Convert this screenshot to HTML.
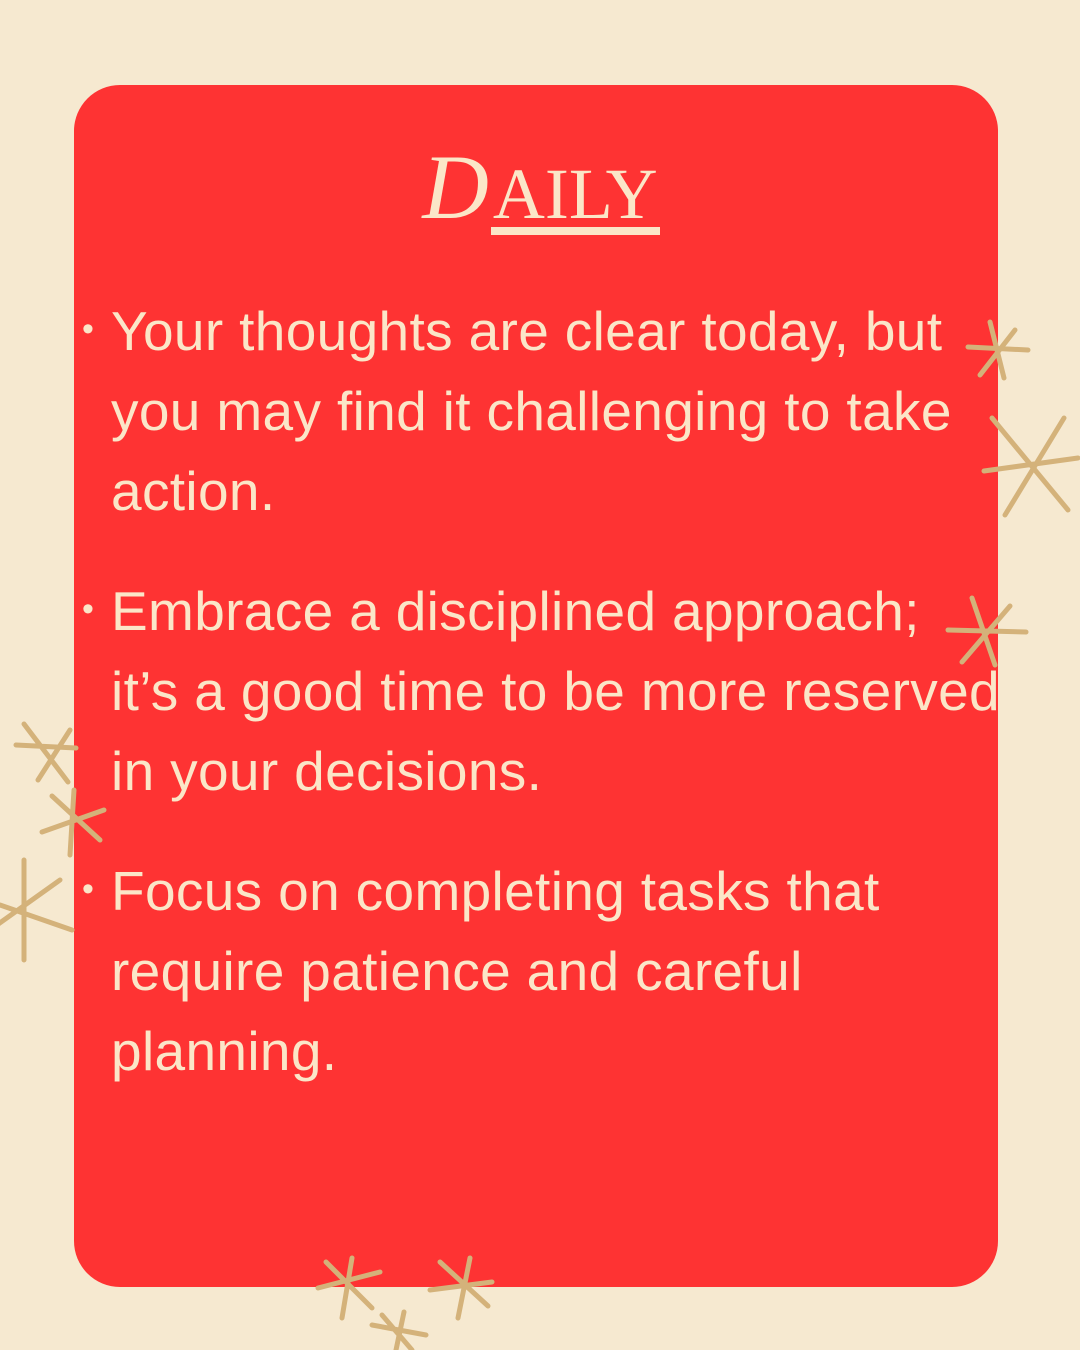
<!DOCTYPE html>
<html><head><meta charset="utf-8"><style>
html,body{margin:0;padding:0}
body{width:1080px;height:1350px;background:#f6e9d0;position:relative;overflow:hidden;font-family:"Liberation Sans",sans-serif}
.card{position:absolute;left:74px;top:85px;width:924px;height:1202px;background:#fe3333;border-radius:46px}
.t{position:absolute;left:111px;color:#fbe6c8;font-size:55px;white-space:nowrap;letter-spacing:0.35px;line-height:1}
.b{position:absolute;left:82px;color:#fbe6c8;font-size:34px;line-height:1}
.title{position:absolute;left:0;width:1080px;top:146px;text-align:center;color:#fbe6c8;font-family:"Liberation Serif",serif;font-size:72px;line-height:1}
.title span{display:inline-block;border-bottom:8px solid #fbe6c8;line-height:0.9;padding:0 2px}
svg{position:absolute;left:0;top:0}
</style></head><body>
<div class="card"></div>
<div class="title"><span style="border:none;font-size:92px;font-style:italic">D</span><span>AILY</span></div>
<div class="b" style="top:312px">•</div>
<div class="t" style="top:304px">Your thoughts are clear today, but</div>
<div class="t" style="top:384px">you may find it challenging to take</div>
<div class="t" style="top:464px">action.</div>
<div class="b" style="top:592px">•</div>
<div class="t" style="top:584px">Embrace a disciplined approach;</div>
<div class="t" style="top:664px">it’s a good time to be more reserved</div>
<div class="t" style="top:744px">in your decisions.</div>
<div class="b" style="top:872px">•</div>
<div class="t" style="top:864px">Focus on completing tasks that</div>
<div class="t" style="top:944px">require patience and careful</div>
<div class="t" style="top:1024px">planning.</div>
<svg width="1080" height="1350" stroke="#d4b27a" stroke-linecap="round" fill="none">
<g stroke-width="5">
<path d="M968 347 L1028 350 M990 322 L1004 378 M1015 330 L980 375"/>
<path d="M984 471 L1078 458 M992 418 L1068 510 M1064 418 L1005 515"/>
<path d="M948 630 L1026 632 M972 598 L995 665 M1010 606 L962 662"/>
<path d="M16 745 L76 748 M24 724 L68 782 M70 730 L38 780"/>
<path d="M42 832 L104 810 M52 796 L100 840 M74 790 L70 855"/>
<path d="M0 905 L72 930 M24 860 L24 960 M-10 930 L60 880"/>
<path d="M318 1288 L380 1272 M326 1262 L372 1308 M352 1258 L342 1318"/>
<path d="M372 1325 L426 1335 M382 1315 L412 1350 M404 1312 L396 1350"/>
<path d="M430 1290 L492 1282 M440 1262 L488 1306 M470 1258 L458 1318"/>
</g></svg>
</body></html>
